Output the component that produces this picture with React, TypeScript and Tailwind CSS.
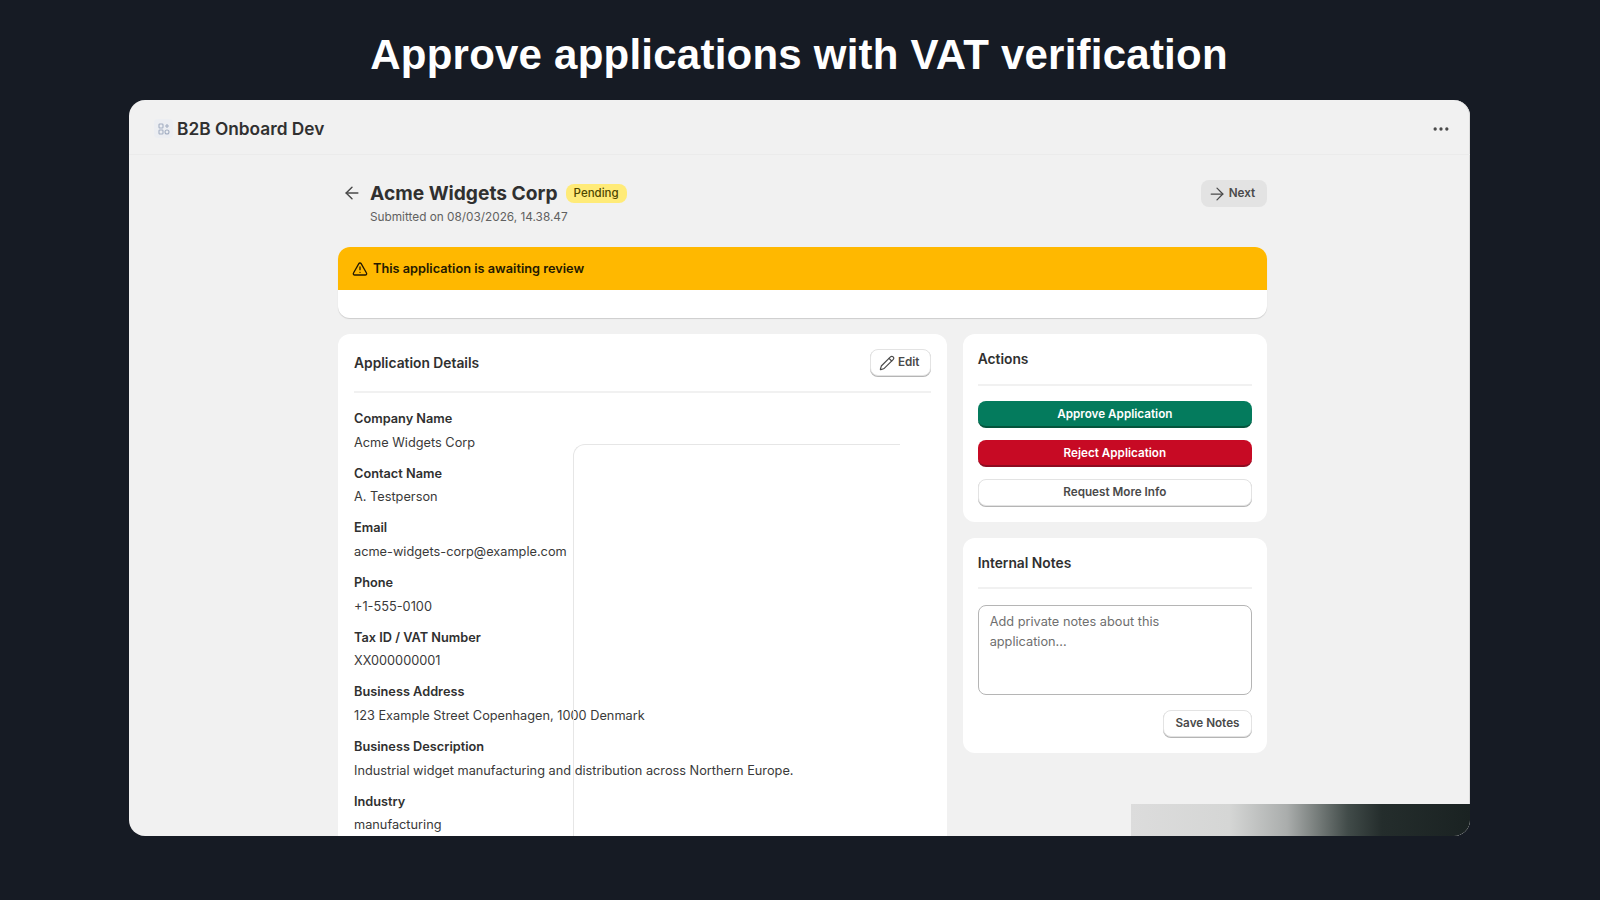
import { AlertTriangle, ArrowLeft, ArrowRight, MoreHorizontal, Pencil } from 'lucide-react';

const details = [
  { label: 'Company Name', value: 'Acme Widgets Corp' },
  { label: 'Contact Name', value: 'A. Testperson' },
  { label: 'Email', value: 'acme-widgets-corp@example.com' },
  { label: 'Phone', value: '+1-555-0100' },
  { label: 'Tax ID / VAT Number', value: 'XX000000001' },
  { label: 'Business Address', value: '123 Example Street Copenhagen, 1000 Denmark' },
  { label: 'Business Description', value: 'Industrial widget manufacturing and distribution across Northern Europe.' },
  { label: 'Industry', value: 'manufacturing' },
];

function AppIcon() {
  return (
    <div className="flex h-[19px] w-[19px] items-center justify-center rounded bg-[#eceef2]">
      <svg width="12" height="12" viewBox="0 0 12 12" fill="none" stroke="#a3aec2" strokeWidth="1.1">
        <rect x="1" y="1" width="4" height="4" rx="0.8" />
        <rect x="1" y="7" width="4" height="4" rx="0.8" />
        <rect x="7" y="7" width="4" height="4" rx="2" />
        <path d="M9 1v4M7 3h4" />
      </svg>
    </div>
  );
}

export default function App() {
  return (
    <div className="relative flex h-[900px] w-full flex-col overflow-hidden bg-[#161b24] font-['Inter',sans-serif]">
      <h1 className="flex h-[100px] items-center justify-center pr-[2px] pt-[9px] font-['Liberation_Sans',sans-serif] text-[42px] font-bold tracking-[0.23px] text-white">
        Approve applications with VAT verification
      </h1>

      <div className="relative ml-[129px] h-[736px] w-[1341px] overflow-hidden rounded-2xl bg-[#f1f1f1] text-[#303030] shadow-[inset_-1px_0_0_#dcdcdc]">
        <header className="flex h-[55px] items-center justify-between border-b border-[#ebebeb] pl-[25px] pr-[19px] pt-[3px]">
          <div className="flex items-center gap-[4px]">
            <AppIcon />
            <span className="text-[17.3px] font-semibold text-[#303030]">B2B Onboard Dev</span>
          </div>
          <MoreHorizontal className="h-5 w-5 text-[#4a4a4a]" />
        </header>

        <main className="ml-[209px] w-[929px]">
          <div className="flex items-start justify-between pt-[25px]">
            <div className="flex items-start">
              <ArrowLeft className="ml-[4px] mr-[8px] mt-[3px] h-5 w-5 text-[#4a4a4a]" strokeWidth={1.75} />
              <div>
                <div className="flex items-center gap-[8px]">
                  <span className="text-[19.2px] font-bold leading-[26px]">Acme Widgets Corp</span>
                  <span className="rounded-lg bg-[#ffeb78] px-[8px] py-[2px] text-[11.5px] font-medium leading-[15px] text-[#4f4700]">Pending</span>
                </div>
                <p className="mt-[3px] text-[11.8px] leading-[16px] text-[#616161]">Submitted on 08/03/2026, 14.38.47</p>
              </div>
            </div>
            <button className="flex h-[27px] w-[66px] items-center justify-center gap-[2px] rounded-lg bg-[#e3e3e3] pr-[6px] text-[11.7px] font-semibold text-[#4a4a4a]">
              <ArrowRight className="h-5 w-5" strokeWidth={1.5} />
              Next
            </button>
          </div>

          <section className="mt-[22px] overflow-hidden rounded-xl bg-white shadow-[0_1px_1px_rgba(0,0,0,0.15)]">
            <div className="flex h-[43px] items-center gap-[5px] bg-[#ffb800] px-[14px] text-[12.75px] font-semibold text-[#251a00]">
              <AlertTriangle className="h-4 w-4" />
              This application is awaiting review
            </div>
            <div className="h-[28px]" />
          </section>

          <div className="mt-[16px] grid grid-cols-[2fr_1fr] items-start gap-4">
            <section className="h-[600px] rounded-t-xl bg-white px-[16px]">
              <div className="flex h-[59px] items-center justify-between border-b-2 border-[#f1f1f1]">
                <h2 className="pt-[2px] text-[13.8px] font-semibold">Application Details</h2>
                <button className="flex h-[27px] w-[61px] items-center justify-center gap-[3px] rounded-lg border border-[#e3e3e3] bg-white pr-[2px] text-[11.7px] font-semibold text-[#4a4a4a] shadow-[0_1px_0_#b5b5b5]">
                  <Pencil className="h-4 w-4" strokeWidth={1.75} />
                  Edit
                </button>
              </div>
              <dl className="flex flex-col gap-[11.2px] pt-[16px]">
                {details.map((item) => (
                  <div key={item.label} className="flex h-[43.5px] flex-col justify-between">
                    <dt className="text-[12.75px] font-semibold leading-[20px]">{item.label}</dt>
                    <dd className="text-[12.75px] leading-[20px] text-[#3a3a3a]">{item.value}</dd>
                  </div>
                ))}
              </dl>
            </section>

            <div className="flex flex-col gap-4">
              <section className="rounded-xl bg-white px-[15px] pb-[16px]">
                <h2 className="flex h-[52px] items-center border-b-2 border-[#f1f1f1] text-[13.8px] font-semibold">Actions</h2>
                <div className="flex flex-col gap-[12px] pt-[15px]">
                  <button className="h-[27px] rounded-lg border-b-2 border-[#04543c] bg-[#047b5d] pt-[2px] text-[11.7px] font-semibold text-white">Approve Application</button>
                  <button className="h-[27px] rounded-lg border-b-2 border-[#8e0b21] bg-[#c70a24] pt-[2px] text-[11.7px] font-semibold text-white">Reject Application</button>
                  <button className="h-[27px] rounded-lg border border-[#e3e3e3] bg-white text-[11.7px] font-semibold text-[#4a4a4a] shadow-[0_1px_0_#b5b5b5]">Request More Info</button>
                </div>
              </section>

              <section className="rounded-xl bg-white px-[15px] pb-[16px]">
                <h2 className="flex h-[51px] items-center border-b-2 border-[#f1f1f1] pt-[2px] text-[13.8px] font-semibold">Internal Notes</h2>
                <div className="pt-[16px]">
                  <div className="h-[90px] rounded-lg border border-[#b5b5b5] bg-white py-[6px] pl-[11px] pr-[80px] text-[12.75px] leading-[19.5px] text-[#6f6f6f]">
                    Add private notes about this application...
                  </div>
                </div>
                <div className="flex justify-end pt-[15px]">
                  <button className="h-[27px] w-[89px] rounded-lg border border-[#e3e3e3] bg-white pt-[1px] text-[11.7px] font-semibold text-[#4a4a4a] shadow-[0_1px_0_#b5b5b5]">Save Notes</button>
                </div>
              </section>
            </div>
          </div>
        </main>

        {/* stray frame left over in the capture, sits over the details card */}
        <div className="absolute left-[444px] top-[344px] h-[400px] w-[327px] rounded-tl-xl border-l border-t border-[#e6e6e6]" />
        <div className="absolute bottom-0 right-0 h-[32px] w-[339px] bg-[linear-gradient(to_right,#dcdcdc_0%,#d5d6d5_29%,#aaadac_46%,#7c8280_54%,#414b49_64%,#242d2c_74%,#1a2222_100%)]" />
      </div>
    </div>
  );
}
